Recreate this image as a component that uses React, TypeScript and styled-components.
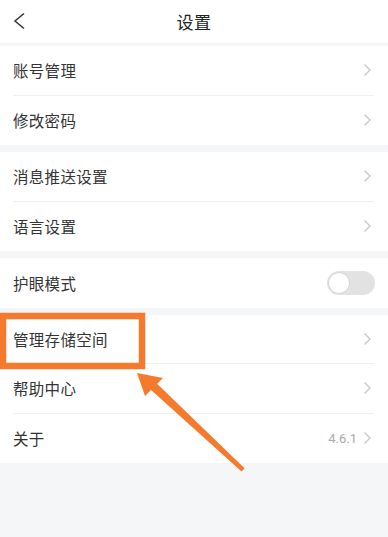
import React, { useState } from 'react';
import styled, { createGlobalStyle } from 'styled-components';

const GlobalStyle = createGlobalStyle`
  html, body {
    margin: 0;
    padding: 0;
    background: #f5f6f8;
    font-family: "Noto Sans CJK SC", "Noto Sans", sans-serif;
  }
`;

const Page = styled.div`
  position: relative;
  width: 388px;
  min-height: 537px;
  background: #f5f6f8;
  overflow: hidden;
`;

const Header = styled.div`
  position: relative;
  height: 43px;
  background: #ffffff;
  display: flex;
  align-items: center;
  justify-content: center;
  margin-bottom: 3px;
`;

const BackButton = styled.button`
  position: absolute;
  left: 8px;
  top: 8px;
  width: 24px;
  height: 26px;
  padding: 0;
  border: none;
  background: transparent;
  display: flex;
  align-items: center;
  justify-content: center;
`;

const Title = styled.h1`
  margin: 0;
  font-size: 17px;
  font-weight: 400;
  color: #222;
  letter-spacing: 0.5px;
`;

const Group = styled.div`
  background: #ffffff;
  margin-bottom: 7px;
`;

const Row = styled.div<{ $last?: boolean }>`
  height: 49.5px;
  box-sizing: border-box;
  margin: 0 14px 0 13px;
  display: flex;
  align-items: center;
  justify-content: space-between;
  border-bottom: ${p => (p.$last ? 'none' : '1px solid #efefef')};
`;

const Label = styled.span`
  font-size: 15.5px;
  color: #333;
  letter-spacing: 0.3px;
`;

const Trailing = styled.div`
  display: flex;
  align-items: center;
  gap: 6px;
  padding-right: 3px;
`;

const Version = styled.span`
  font-family: "Roboto", "Noto Sans", sans-serif;
  font-size: 13px;
  color: #aaaaaa;
`;

const Track = styled.button<{ $on: boolean }>`
  width: 48px;
  height: 24px;
  border-radius: 12px;
  border: none;
  padding: 0;
  background: ${p => (p.$on ? '#f47b30' : '#e2e2e2')};
  position: relative;
  margin-right: -1px;
`;

const Knob = styled.span<{ $on: boolean }>`
  position: absolute;
  top: 1px;
  left: ${p => (p.$on ? '25px' : '1px')};
  width: 20px;
  height: 20px;
  border-radius: 50%;
  background: #ffffff;
  border: 1px solid #d6d6d6;
`;

const Annotation = styled.svg`
  position: absolute;
  left: 0;
  top: 0;
  width: 388px;
  height: 537px;
  pointer-events: none;
`;

const Chevron = () => (
  <svg width="8" height="14" viewBox="0 0 8 14">
    <polyline points="1.5,1.5 7,7 1.5,12.5" fill="none" stroke="#c6c6c6" strokeWidth="1.3" />
  </svg>
);

interface Item {
  label: string;
  extra?: string;
  toggle?: boolean;
}

const groups: Item[][] = [
  [{ label: '账号管理' }, { label: '修改密码' }],
  [{ label: '消息推送设置' }, { label: '语言设置' }],
  [{ label: '护眼模式', toggle: true }],
  [{ label: '管理存储空间' }, { label: '帮助中心' }, { label: '关于', extra: '4.6.1' }],
];

const App: React.FC = () => {
  const [eyeCare, setEyeCare] = useState(false);

  return (
    <Page>
      <GlobalStyle />
      <Header>
        <BackButton>
          <svg width="14" height="18" viewBox="0 0 14 18">
            <polyline points="11,1.5 2,9 11,16.5" fill="none" stroke="#333" strokeWidth="1.5" />
          </svg>
        </BackButton>
        <Title>设置</Title>
      </Header>

      {groups.map((items, gi) => (
        <Group key={gi}>
          {items.map((item, i) => (
            <Row key={item.label} $last={i === items.length - 1}>
              <Label>{item.label}</Label>
              {item.toggle ? (
                <Track $on={eyeCare} onClick={() => setEyeCare(!eyeCare)}>
                  <Knob $on={eyeCare} />
                </Track>
              ) : (
                <Trailing>
                  {item.extra && <Version>{item.extra}</Version>}
                  <Chevron />
                </Trailing>
              )}
            </Row>
          ))}
        </Group>
      ))}

      {/* orange highlight box and arrow drawn over the list */}
      <Annotation viewBox="0 0 388 537">
        <rect x="3" y="316" width="139" height="50" fill="none" stroke="#f47a2e" strokeWidth="6.5" />
        <polygon points="137,373 163,378 145,396" fill="#f47a2e" />
        <polygon points="148.3,387.5 154.2,381 244.6,468.3 241.5,471.6" fill="#f47a2e" />
      </Annotation>
    </Page>
  );
};

export default App;
